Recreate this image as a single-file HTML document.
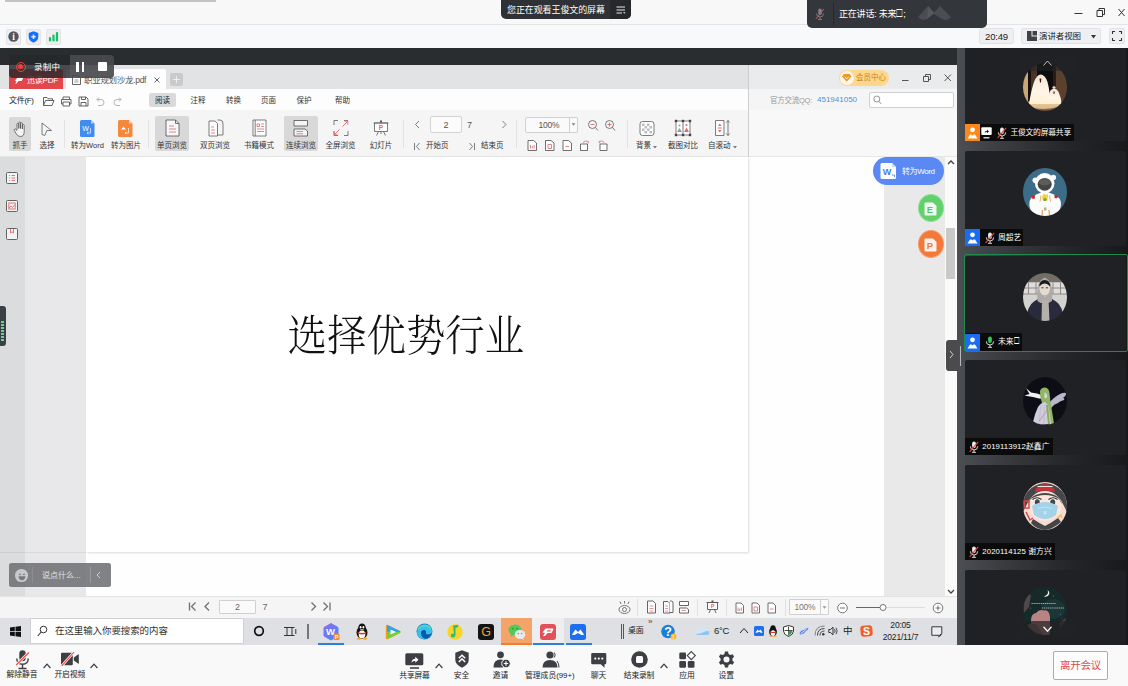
<!DOCTYPE html>
<html lang="zh-CN">
<head>
<meta charset="utf-8">
<title>腾讯会议</title>
<style>
*{box-sizing:border-box;margin:0;padding:0}
html,body{width:1128px;height:686px;overflow:hidden;background:#f9f9f9}
body{position:relative;font-family:"Liberation Sans","Noto Sans CJK SC","DejaVu Sans",sans-serif;font-size:9px;color:#222;line-height:1}
.a{position:absolute}
.t{position:absolute;white-space:nowrap;line-height:1}
.c{transform:translateX(-50%)}
.tofu{font-family:"DejaVu Sans",sans-serif;font-size:1.2em;line-height:0;vertical-align:-.04em}
svg{position:absolute;overflow:visible;display:block}
#titlebar{left:0;top:0;width:1128px;height:25px;background:#f8f8f9;border-bottom:1px solid #e3e4e6}
#toolbar{left:0;top:25px;width:1128px;height:23px;background:#f8f9fa}
#band{left:0;top:48px;width:957px;height:17px;background:#2a2d30}
#share{left:0;top:65px;width:957px;height:580px;overflow:hidden;background:#fefefe}
#share>*{margin-top:-65px}
#pclip{left:0;top:48px;width:1128px;height:597px;overflow:hidden;pointer-events:none}
#panel{left:957px;top:48px;width:171px;height:597px;background:linear-gradient(90deg,#4b4e53 0,#484b50 8px,#3a3c40 45px,#25262a 110px,#18191b 171px)}
.card{background:#202124;border-radius:2px}
#bottom{left:0;top:645px;width:1128px;height:41px;background:#f9f9f9}
</style>
</head>
<body>
<!-- ================= SHARED SCREEN (PDF reader) ================= -->
<div class="a" id="share">
  <!-- tab row -->
  <div class="a" style="left:0;top:65px;width:957px;height:24px;background:#e2e3e5"></div>
  <div class="a" style="left:749px;top:65px;width:208px;height:24px;background:#eaebed"></div>
  <div class="a" style="left:9px;top:69px;width:54px;height:20px;background:#e2474b;border-radius:2px 2px 0 0"></div>
  <svg style="left:14px;top:76px" width="10" height="9" viewBox="0 0 10 9"><path d="M1 4.5 L3.5 1.5 H8.5 Q9.5 1.5 9 2.6 L7.6 5 H4.5 L2.5 7.5 H1.2 L2.6 5.2 Z" fill="#fff"/></svg>
  <div class="t" style="left:27px;top:76.5px;font-size:8px;color:#fff;letter-spacing:-.2px">迅读PDF</div>
  <div class="a" style="left:66px;top:69px;width:100px;height:20px;background:#fdfdfd;border-radius:2px 2px 0 0"></div>
  <svg style="left:72px;top:75px" width="9" height="10" viewBox="0 0 9 10"><path d="M.5 .5H6L8.5 3V9.5H.5Z" fill="#fff" stroke="#555" stroke-width=".9"/><path d="M2.3 5H6.5M2.3 7H6.5" stroke="#888" stroke-width=".8"/></svg>
  <div class="t" style="left:84px;top:75.5px;font-size:8.5px;color:#555;letter-spacing:-.3px">职业规划沙龙.pdf</div>
  <svg style="left:154px;top:77px" width="6" height="6" viewBox="0 0 6 6"><path d="M.5 .5L5.5 5.5M5.5 .5L.5 5.5" stroke="#555" stroke-width=".9"/></svg>
  <div class="a" style="left:169.5px;top:73px;width:13px;height:13px;background:#c9cacc;border-radius:2px"></div>
  <svg style="left:172.5px;top:76px" width="7" height="7" viewBox="0 0 7 7"><path d="M3.5 0V7M0 3.5H7" stroke="#eee" stroke-width="1"/></svg>
  <!-- member centre pill -->
  <div class="a" style="left:839px;top:69.7px;width:50px;height:16.3px;border-radius:8.2px;background:#fcd88f"></div>
  <div class="a" style="left:840px;top:70.7px;width:14.3px;height:14.3px;border-radius:50%;background:#fff8ea"></div>
  <svg style="left:842.4px;top:73.4px" width="9.5" height="9.5" viewBox="0 0 8 8"><path d="M1.6 .8H6.4L8 3 4 7.4 0 3Z" fill="#f0982a"/><path d="M2.4 3.2L4 5 5.6 3.2" fill="none" stroke="#fff" stroke-width=".7"/></svg>
  <div class="t" style="left:856px;top:74px;font-size:7.5px;color:#c9821c">会员中心</div>
  <svg style="left:901px;top:72.7px" width="52" height="10" viewBox="0 0 52 10"><path d="M1 7.5H7.5" stroke="#555" stroke-width="1"/><path d="M22.5 3.5H27.5V8.5H22.5ZM24.5 3.5V1.5H29.5V6.5H27.5" fill="none" stroke="#444" stroke-width=".9"/><path d="M43.5 1.5L50 8M50 1.5L43.5 8" stroke="#444" stroke-width=".9"/></svg>

  <!-- menu row -->
  <div class="a" style="left:0;top:89px;width:957px;height:21px;background:#fdfdfd"></div>
  <div class="a" style="left:749px;top:89px;width:208px;height:21px;background:#f5f5f6"></div>
  <div class="t" style="left:9px;top:96.5px;font-size:8px;color:#222;letter-spacing:-.3px">文件(F)</div>
  <svg style="left:42px;top:94.8px" width="84" height="13" viewBox="0 0 84 13">
    <g fill="none" stroke="#555" stroke-width=".9" stroke-linejoin="round">
      <path d="M1.5 10.5V2.5H5L6 3.8H10.5V5.5M1.5 10.5L3.5 5.5H12L10 10.5Z"/>
      <path d="M21 4.5V2H27.5V4.5M19.5 4.5H29V9H27.5M21 9H19.5V4.5M21 7H27.5V11H21Z"/>
      <path d="M37 2H44L46 4V11H37ZM39.5 2V4.5H43.5V2M39 11V7.5H44V11"/>
    </g>
    <g fill="none" stroke="#aaa" stroke-width=".9">
      <path d="M55 4.5H59Q62 4.5 62 7.5T59 10.5H56M57 2.5L55 4.5L57 6.5"/>
      <path d="M79 4.5H75Q72 4.5 72 7.5T75 10.5H78M77 2.5L79 4.5L77 6.5"/>
    </g>
  </svg>
  <div class="a" style="left:149px;top:92.5px;width:27px;height:14px;background:#dadada;border-radius:2px"></div>
  <div class="t c" style="left:162.5px;top:96.8px;font-size:7.5px;color:#222">阅读</div>
  <div class="t c" style="left:198px;top:96.8px;font-size:7.5px;color:#333">注释</div>
  <div class="t c" style="left:233.5px;top:96.8px;font-size:7.5px;color:#333">转换</div>
  <div class="t c" style="left:268.5px;top:96.8px;font-size:7.5px;color:#333">页面</div>
  <div class="t c" style="left:304px;top:96.8px;font-size:7.5px;color:#333">保护</div>
  <div class="t c" style="left:342.5px;top:96.8px;font-size:7.5px;color:#333">帮助</div>
  <div class="t" style="left:770px;top:96.8px;font-size:7.5px;color:#999;letter-spacing:-.25px">官方交流QQ:</div>
  <div class="t" style="left:817px;top:96px;font-size:8px;color:#4a90e2;letter-spacing:0">451941050</div>
  <div class="a" style="left:869px;top:92px;width:85px;height:16px;background:#fff;border:1px solid #d0d0d0;border-radius:2px"></div>
  <svg style="left:873px;top:95px" width="9" height="10" viewBox="0 0 9 10"><circle cx="3.8" cy="4" r="3" fill="none" stroke="#888" stroke-width=".9"/><path d="M6 6.4L8 8.8" stroke="#888" stroke-width="1"/></svg>

  <!-- toolbar row -->
  <div class="a" style="left:0;top:110px;width:957px;height:47px;background:#f5f5f6"></div>
  <div class="a" style="left:749px;top:110px;width:208px;height:47px;background:#f8f8f9"></div>
  <div class="a" style="left:0;top:156px;width:957px;height:1px;background:#e6e6e6"></div>
  <!-- 抓手 -->
  <div class="a" style="left:9px;top:117px;width:22px;height:34px;background:#d8d8d9;border-radius:2px"></div>
  <svg style="left:13px;top:121px" width="14" height="17" viewBox="0 0 14 17"><path d="M4 9V3.2Q4 2.2 4.9 2.2T5.8 3.2V7.5V2Q5.8 1 6.7 1T7.6 2V7.5V2.6Q7.6 1.7 8.5 1.7T9.4 2.6V8V4.4Q9.4 3.5 10.3 3.5T11.2 4.4V10.5Q11.2 15.5 7.4 15.5Q4.8 15.5 3.4 13L1.3 9.3Q.9 8.4 1.7 8T3 8.3L4 9.8" fill="#f4f4f4" stroke="#555" stroke-width=".8" stroke-linejoin="round"/></svg>
  <div class="t c" style="left:20px;top:142.3px;font-size:7.5px;color:#333">抓手</div>
  <!-- 选择 -->
  <svg style="left:41px;top:122px" width="12" height="16" viewBox="0 0 12 16"><path d="M1 1L10.5 8.5H5.8L3.8 13.5L1 12.5Z" fill="none" stroke="#5c5c5c" stroke-width=".8" stroke-linejoin="round"/></svg>
  <div class="t c" style="left:47px;top:142.3px;font-size:7.5px;color:#333">选择</div>
  <div class="a" style="left:64px;top:120px;width:1px;height:28px;background:#e2e2e2"></div>
  <!-- 转为Word -->
  <svg style="left:80px;top:120px" width="15" height="17" viewBox="0 0 15 17"><path d="M1.5 0H11L14.5 3.5V15.5Q14.5 17 13 17H1.5Q0 17 0 15.5V1.5Q0 0 1.5 0Z" fill="#3f8df2"/><path d="M11 0V3.5H14.5Z" fill="#a9ccfa"/><text x="5.6" y="11.3" font-size="7" fill="#fff" text-anchor="middle" font-family="Liberation Sans,sans-serif">W</text><path d="M10.5 8V13H7M8.3 11.8L7 13L8.3 14.2" fill="none" stroke="#dbe9ff" stroke-width=".8"/></svg>
  <div class="t c" style="left:87.5px;top:142.3px;font-size:7.5px;color:#333">转为Word</div>
  <!-- 转为图片 -->
  <svg style="left:118px;top:120px" width="15" height="17" viewBox="0 0 15 17"><path d="M1.5 0H11L14.5 3.5V15.5Q14.5 17 13 17H1.5Q0 17 0 15.5V1.5Q0 0 1.5 0Z" fill="#f6883c"/><path d="M11 0V3.5H14.5Z" fill="#fbc9a4"/><path d="M2.5 10L5.5 6.5 8 9.5H2.5Z" fill="#fff"/><path d="M10.5 8V13H7M8.3 11.8L7 13L8.3 14.2" fill="none" stroke="#ffe9da" stroke-width=".8"/></svg>
  <div class="t c" style="left:126px;top:142.3px;font-size:7.5px;color:#333">转为图片</div>
  <div class="a" style="left:148px;top:120px;width:1px;height:28px;background:#e2e2e2"></div>
  <!-- 单页浏览 -->
  <div class="a" style="left:155px;top:116px;width:34px;height:35px;background:#d8d8d9;border-radius:2px"></div>
  <svg style="left:165px;top:119px" width="15" height="18" viewBox="0 0 15 18"><path d="M1 1H10.5L14 4.5V17H1Z" fill="#f7f7f7" stroke="#505050" stroke-width=".8" stroke-linejoin="round"/><path d="M10.5 1V4.5H14" fill="none" stroke="#505050" stroke-width=".8"/><path d="M4 7H9M4 10H11M4 13H11" stroke="#e0787c" stroke-width=".9"/></svg>
  <div class="t c" style="left:172px;top:142.3px;font-size:7.5px;color:#333">单页浏览</div>
  <!-- 双页浏览 -->
  <svg style="left:208px;top:119px" width="16" height="18" viewBox="0 0 16 18"><path d="M1 2H7L9.5 4.5V17H1Z" fill="#fff" stroke="#5c5c5c" stroke-width=".8" stroke-linejoin="round"/><path d="M9.5 1H12Q15 1 15 5V16H9.5" fill="none" stroke="#5c5c5c" stroke-width=".8"/><path d="M3 8H6M3 11H7M3 14H7" stroke="#e0787c" stroke-width=".9"/></svg>
  <div class="t c" style="left:215px;top:142.3px;font-size:7.5px;color:#333">双页浏览</div>
  <!-- 书籍模式 -->
  <svg style="left:252px;top:119px" width="15" height="18" viewBox="0 0 15 18"><path d="M1 1H14V17H1Z" fill="#fff" stroke="#5c5c5c" stroke-width=".8"/><path d="M3.2 1V17" stroke="#5c5c5c" stroke-width=".8"/><path d="M5 5H7.5V7.5H5ZM9 5H12M9 7.5H12M5 10H12M5 12.5H12" fill="none" stroke="#e0787c" stroke-width=".9"/></svg>
  <div class="t c" style="left:259px;top:142.3px;font-size:7.5px;color:#333">书籍模式</div>
  <!-- 连续浏览 -->
  <div class="a" style="left:284px;top:116px;width:34px;height:35px;background:#d8d8d9;border-radius:2px"></div>
  <svg style="left:293px;top:119px" width="16" height="18" viewBox="0 0 16 18"><path d="M1 1.5H14.5V7H1Z" fill="#f4f4f4" stroke="#505050" stroke-width=".8"/><path d="M1 10H12L14.5 12V17H1Z" fill="#f4f4f4" stroke="#505050" stroke-width=".8" stroke-linejoin="round"/><path d="M3.5 12.5H10M3.5 14.8H10" stroke="#e0787c" stroke-width=".9"/></svg>
  <div class="t c" style="left:301px;top:142.3px;font-size:7.5px;color:#333">连续浏览</div>
  <!-- 全屏浏览 -->
  <svg style="left:333px;top:119px" width="16" height="18" viewBox="0 0 16 18"><path d="M1 6V1.5H5M11 1.5H15M15 12V16.5H11M5 16.5H1V12" fill="none" stroke="#5c5c5c" stroke-width=".8"/><path d="M9.5 7.5L14.5 2.5M11.5 2.2H14.8V5.5M6.5 10.5L1.5 15.5M1.2 12.5V15.8H4.5" fill="none" stroke="#e0686e" stroke-width=".9"/></svg>
  <div class="t c" style="left:340.5px;top:142.3px;font-size:7.5px;color:#333">全屏浏览</div>
  <!-- 幻灯片 -->
  <svg style="left:373px;top:119px" width="16" height="18" viewBox="0 0 16 18"><path d="M7 1.5H9V3.5H7Z" fill="#555"/><path d="M1.5 4H14.5V12.5H1.5Z" fill="#fff" stroke="#5c5c5c" stroke-width=".8"/><path d="M.5 4H15.5M5.5 12.5L3.5 16.5M10.5 12.5L12.5 16.5M8 12.5V15" stroke="#5c5c5c" stroke-width=".8"/><text x="8" y="10.8" font-size="6.5" font-weight="bold" fill="#e0686e" text-anchor="middle" font-family="Liberation Sans,sans-serif">P</text></svg>
  <div class="t c" style="left:381px;top:142.3px;font-size:7.5px;color:#333">幻灯片</div>
  <div class="a" style="left:403px;top:120px;width:1px;height:28px;background:#e2e2e2"></div>
  <!-- page nav -->
  <svg style="left:414px;top:120px" width="94" height="9" viewBox="0 0 94 9"><path d="M5 1L1.5 4.5L5 8M88.5 1L92 4.5L88.5 8" fill="none" stroke="#5c5c5c" stroke-width=".8"/></svg>
  <div class="a" style="left:430px;top:116px;width:32px;height:17px;background:#fbfbfb;border:1px solid #d4d4d4;border-radius:2px"></div>
  <div class="t c" style="left:446px;top:120.5px;font-size:9px;color:#555">2</div>
  <div class="t c" style="left:469.5px;top:120.5px;font-size:9px;color:#555">7</div>
  <svg style="left:413px;top:142px" width="8" height="9" viewBox="0 0 8 9"><path d="M1.5 1V8M6.5 1L3.5 4.5L6.5 8" fill="none" stroke="#5c5c5c" stroke-width=".8"/></svg>
  <div class="t" style="left:426px;top:142.3px;font-size:7.5px;color:#333">开始页</div>
  <svg style="left:468px;top:142px" width="8" height="9" viewBox="0 0 8 9"><path d="M6.5 1V8M1.5 1L4.5 4.5L1.5 8" fill="none" stroke="#5c5c5c" stroke-width=".8"/></svg>
  <div class="t" style="left:481px;top:142.3px;font-size:7.5px;color:#333">结束页</div>
  <div class="a" style="left:516px;top:120px;width:1px;height:28px;background:#e2e2e2"></div>
  <!-- zoom -->
  <div class="a" style="left:525px;top:117px;width:53px;height:16px;background:#fafafa;border:1px solid #d0d0d0;border-radius:2px"></div>
  <div class="a" style="left:569px;top:118px;width:1px;height:14px;background:#d0d0d0"></div>
  <div class="t c" style="left:549px;top:120.5px;font-size:8.5px;color:#555;letter-spacing:-.2px">100%</div>
  <svg style="left:571px;top:123px" width="5" height="3" viewBox="0 0 5 3"><path d="M.5 .3H4.5L2.5 2.8Z" fill="#888"/></svg>
  <svg style="left:587px;top:119px" width="30" height="13" viewBox="0 0 30 13">
    <g fill="none" stroke="#5c5c5c" stroke-width=".8"><circle cx="5.5" cy="5.5" r="4"/><path d="M8.5 8.5L11 11.5"/><circle cx="22.5" cy="5.5" r="4"/><path d="M25.5 8.5L28 11.5"/></g>
    <path d="M3.5 5.5H7.5M20.5 5.5H24.5M22.5 3.5V7.5" stroke="#e0686e" stroke-width=".9"/></svg>
  <svg style="left:527px;top:139px" width="82" height="13" viewBox="0 0 82 13">
    <g fill="#fff" stroke="#555" stroke-width=".85" stroke-linejoin="round">
      <path d="M1 1.5H6.5L9.5 4V11.5H1Z"/><path d="M18.5 1.5H24L27 4V11.5H18.5Z"/><path d="M36 1.5H41.5L44.5 4V11.5H36Z"/>
      <path d="M53.5 5H60.5V11.5H53.5Z"/><path d="M73 5H80V11.5H73Z"/>
    </g>
    <g fill="none" stroke="#e0686e" stroke-width=".8">
      <path d="M3.5 6V9.5M5.3 7V9.5M7.1 6V9.5"/>
      <path d="M21 5.5H24.5V9.5H21Z"/><path d="M38.5 7.5H42"/>
      <path d="M56 3.5Q58 1 61.5 2.5L61 4.5"/><path d="M77.5 3.5Q75.5 1 72 2.5L72.5 4.5"/>
    </g></svg>
  <div class="a" style="left:627px;top:120px;width:1px;height:28px;background:#e2e2e2"></div>
  <!-- 背景 -->
  <svg style="left:639px;top:120px" width="16" height="17" viewBox="0 0 16 17"><rect x="1" y="1.5" width="14" height="14" rx="2.5" fill="#fff" stroke="#5c5c5c" stroke-width=".8"/><g fill="#bdbdbd"><rect x="3" y="3.5" width="2.5" height="2.5"/><rect x="8" y="3.5" width="2.5" height="2.5"/><rect x="5.5" y="6" width="2.5" height="2.5"/><rect x="10.5" y="6" width="2.5" height="2.5"/><rect x="3" y="8.5" width="2.5" height="2.5"/><rect x="8" y="8.5" width="2.5" height="2.5"/><rect x="5.5" y="11" width="2.5" height="2.5"/><rect x="10.5" y="11" width="2.5" height="2.5"/></g></svg>
  <div class="t" style="left:636px;top:142.3px;font-size:7.5px;color:#333">背景</div>
  <svg style="left:653px;top:145.5px" width="4" height="3" viewBox="0 0 4 3"><path d="M0 0H4L2 2.5Z" fill="#777"/></svg>
  <!-- 截图对比 -->
  <svg style="left:674px;top:119px" width="18" height="18" viewBox="0 0 18 18"><path d="M2 2H16V16H2ZM9 2V16" fill="#fff" stroke="#5c5c5c" stroke-width=".8"/><g fill="#444"><rect x=".8" y=".8" width="2.4" height="2.4"/><rect x="7.8" y=".8" width="2.4" height="2.4"/><rect x="14.8" y=".8" width="2.4" height="2.4"/><rect x=".8" y="14.8" width="2.4" height="2.4"/><rect x="7.8" y="14.8" width="2.4" height="2.4"/><rect x="14.8" y="14.8" width="2.4" height="2.4"/></g><path d="M3 13L5.5 9L8 13Z" fill="#999"/><path d="M10 13L12.5 8.5L15 13Z" fill="#e0686e"/><circle cx="5.5" cy="6.5" r="1" fill="#999"/><circle cx="12.5" cy="6" r="1" fill="#e0686e"/></svg>
  <div class="t c" style="left:683px;top:142.3px;font-size:7.5px;color:#333">截图对比</div>
  <!-- 自滚动 -->
  <svg style="left:714px;top:119px" width="17" height="18" viewBox="0 0 17 18"><path d="M1.5 1.5H10V16.5H1.5Z" fill="#fff" stroke="#5c5c5c" stroke-width=".8"/><path d="M4 7L5.8 4.5L7.6 7ZM4 11L5.8 13.5L7.6 11ZM4 8.5H7.6V9.5H4Z" fill="#e0686e"/><path d="M14 1.5V16.5M12.3 3.5L14 1.5L15.7 3.5M12.3 14.5L14 16.5L15.7 14.5" fill="none" stroke="#5c5c5c" stroke-width=".8"/></svg>
  <div class="t" style="left:708px;top:142.3px;font-size:7.5px;color:#333">自滚动</div>
  <svg style="left:733px;top:145.5px" width="4" height="3" viewBox="0 0 4 3"><path d="M0 0H4L2 2.5Z" fill="#777"/></svg>

  <!-- content backgrounds -->
  <div class="a" style="left:0;top:157px;width:25px;height:440px;background:#dbdcde"></div>
  <div class="a" style="left:25px;top:157px;width:61px;height:440px;background:#e8e8ea"></div>
  <div class="a" style="left:86px;top:157px;width:798px;height:440px;background:#fefefe"></div>
  <div class="a" style="left:884px;top:157px;width:61px;height:440px;background:#e9e9e9"></div>
  <div class="a" style="left:945px;top:157px;width:12px;height:440px;background:#fafafa"></div>
  <!-- page -->
  <div class="a" style="left:86px;top:157px;width:662px;height:395px;background:#fff;box-shadow:1px 1px 2px rgba(0,0,0,.14)"></div>
  <div class="a" style="left:748px;top:65px;width:1px;height:92px;background:#cdcdcd"></div>
  <div class="a" style="left:0;top:552px;width:86px;height:1px;background:rgba(0,0,0,.06)"></div>
  <div class="t" style="left:287.8px;top:308.7px;font-size:39.4px;line-height:56px;font-family:'Liberation Serif','Noto Serif CJK SC',serif;font-weight:300;color:#111;transform:scaleY(1.1);transform-origin:0 50%">选择优势行业</div>
  <!-- left sidebar icons -->
  <svg style="left:6px;top:172px" width="12" height="70" viewBox="0 0 12 70">
    <g fill="#f3f3f3" stroke="#555" stroke-width=".9"><rect x=".5" y=".5" width="11" height="11" rx="1"/><rect x=".5" y="28.5" width="11" height="11" rx="1"/><rect x=".5" y="56.5" width="11" height="11" rx="1"/></g>
    <g fill="none" stroke="#e0686e" stroke-width=".9"><path d="M3 3.5H4M5.5 3.5H9M3 6H4M5.5 6H9M3 8.5H4M5.5 8.5H9"/><rect x="2.8" y="31" width="6.4" height="6"/><path d="M3 36L5 34L6.5 35.5L9 32.5"/><path d="M4.5 57V61L6 59.8L7.5 61V57"/></g>
  </svg>
  <!-- left handle -->
  <div class="a" style="left:0;top:306px;width:6px;height:40px;background:#394047;border-radius:0 3px 3px 0"></div>
  <div class="a" style="left:1px;top:321px;width:3px;height:20px;background:repeating-linear-gradient(#6fd08a 0 2px,#394047 2px 3px)"></div>
  <!-- float buttons -->
  <div class="a" style="left:873px;top:157px;width:71px;height:28px;border-radius:14px;background:#5b89f3"></div>
  <svg style="left:880px;top:162px" width="17" height="18" viewBox="0 0 17 18"><path d="M2 1H12L16 5V15.5Q16 17 14.5 17H2Q.5 17 .5 15.5V2.5Q.5 1 2 1Z" fill="#fff"/><path d="M12 1V5H16Z" fill="#c7d8fb"/><text x="7" y="13" font-size="9" font-weight="bold" fill="#4a7bea" text-anchor="middle" font-family="Liberation Sans,sans-serif">W</text><path d="M12 13H14.5V15" fill="none" stroke="#4a7bea" stroke-width=".8"/></svg>
  <div class="t" style="left:902px;top:167.8px;font-size:8px;color:#fff;letter-spacing:-.4px">转为Word</div>
  <div class="a" style="left:917.8px;top:194px;width:26px;height:27.5px;border-radius:50%;background:#62d06b;border:1px solid #8fdf96"></div>
  <svg style="left:924.3px;top:201.5px" width="13" height="14" viewBox="0 0 13 14"><path d="M1.5 .5H9L12.5 4V12.5Q12.5 13.5 11.5 13.5H1.5Q.5 13.5 .5 12.5V1.5Q.5 .5 1.5 .5Z" fill="#fff" opacity=".9"/><text x="5.8" y="10.8" font-size="9.5" font-weight="bold" fill="#55c860" text-anchor="middle" font-family="Liberation Sans,sans-serif">E</text></svg>
  <div class="a" style="left:917.8px;top:230px;width:26px;height:27.5px;border-radius:50%;background:#f4783a;border:1px solid #f79a6b"></div>
  <svg style="left:924.3px;top:237.5px" width="13" height="14" viewBox="0 0 13 14"><path d="M1.5 .5H9L12.5 4V12.5Q12.5 13.5 11.5 13.5H1.5Q.5 13.5 .5 12.5V1.5Q.5 .5 1.5 .5Z" fill="#fff" opacity=".9"/><text x="6" y="10.8" font-size="9.5" font-weight="bold" fill="#f3773a" text-anchor="middle" font-family="Liberation Sans,sans-serif">P</text></svg>
  <!-- scrollbar -->
  <svg style="left:947px;top:160px" width="8" height="5" viewBox="0 0 8 5"><path d="M1 4L4 1L7 4" fill="none" stroke="#444" stroke-width="1.3"/></svg>
  <div class="a" style="left:946px;top:227.5px;width:9px;height:51.5px;background:#c9c9c9"></div>
  <svg style="left:947px;top:589px" width="8" height="5" viewBox="0 0 8 5"><path d="M1 1L4 4L7 1" fill="none" stroke="#444" stroke-width="1.3"/></svg>
  <!-- say something pill -->
  <div class="a" style="left:9px;top:563px;width:102px;height:24px;border-radius:2.5px;background:rgba(112,113,117,.88)"></div>
  <div class="a" style="left:15.2px;top:569.3px;width:12.6px;height:12.6px;border-radius:50%;background:#c9c9cb"></div>
  <svg style="left:15.5px;top:569.6px" width="12" height="12" viewBox="0 0 12 12"><circle cx="4" cy="4.3" r=".9" fill="#77787b"/><circle cx="8" cy="4.3" r=".9" fill="#77787b"/><path d="M2.5 6.3H9.5Q9 10.3 6 10.3T2.5 6.3Z" fill="#77787b"/></svg>
  <div class="a" style="left:32px;top:567px;width:1px;height:16px;background:#8e8e8e"></div>
  <div class="t" style="left:42px;top:571.5px;font-size:8px;color:#e2e2e2;letter-spacing:0">说点什么...</div>
  <div class="a" style="left:90px;top:567px;width:1px;height:16px;background:#9a9a9a"></div>
  <svg style="left:96px;top:571px" width="5" height="8" viewBox="0 0 5 8"><path d="M4 1L1 4L4 7" fill="none" stroke="#ccc" stroke-width="1"/></svg>

  <!-- PDF status bar -->
  <div class="a" style="left:0;top:597px;width:957px;height:21px;background:#f5f5f6"></div>
  <div class="a" style="left:0;top:596px;width:957px;height:1px;background:#e4e4e4"></div>
  <svg style="left:188px;top:601px" width="145" height="11" viewBox="0 0 145 11"><g fill="none" stroke="#707070" stroke-width="1.3"><path d="M1.5 1.5V9.5M7.5 1.5L3.5 5.5L7.5 9.5"/><path d="M21 1.5L17 5.5L21 9.5"/><path d="M123.5 1.5L127.5 5.5L123.5 9.5"/><path d="M135.5 1.5L139.5 5.5L135.5 9.5M142 1.5V9.5"/></g></svg>
  <div class="a" style="left:219px;top:600px;width:37px;height:14px;background:#fafafa;border:1px solid #d0d0d0;border-radius:1px"></div>
  <div class="t c" style="left:237.5px;top:602.5px;font-size:9px;color:#666">2</div>
  <div class="t c" style="left:265px;top:602.5px;font-size:9px;color:#666">7</div>
  <!-- right cluster -->
  <svg style="left:617px;top:599px" width="15" height="16" viewBox="0 0 15 16"><g fill="none" stroke="#666" stroke-width=".9"><ellipse cx="7.5" cy="10.5" rx="5.5" ry="4"/><circle cx="7.5" cy="10.5" r="2"/><path d="M4 5L3 2.5M7.5 4.5V2M11 5L12 2.5"/></g></svg>
  <div class="a" style="left:637px;top:599px;width:1px;height:17px;background:#e0e0e0"></div>
  <svg style="left:646px;top:600px" width="44" height="14" viewBox="0 0 44 14">
    <g fill="#fff" stroke="#555" stroke-width=".9" stroke-linejoin="round"><path d="M1.5 1H7L9.5 3.5V13H1.5Z"/><path d="M17.5 1.5H22L24 3.5V13H17.5Z"/><path d="M24 1H25.5Q27 1 27 3V12.5H24"/><path d="M33.5 1.5H42.5V5.5H33.5Z"/><path d="M33.5 8H40.5L42.5 9.5V13H33.5Z"/></g>
    <path d="M3.5 6H7.5M3.5 8.5H7.5M3.5 11H7.5M19.2 6H22M19.2 8.5H22M19.2 11H22M35.5 10.5H40" stroke="#e0787c" stroke-width=".8"/></svg>
  <div class="a" style="left:697px;top:599px;width:1px;height:17px;background:#e0e0e0"></div>
  <svg style="left:706px;top:600px" width="13" height="14" viewBox="0 0 13 14"><path d="M5.5 .5H7.5V2H5.5Z" fill="#555"/><path d="M1.5 2.5H11.5V9.5H1.5Z" fill="#fff" stroke="#555" stroke-width=".9"/><path d="M.5 2.5H12.5M4.5 9.5L3 13M8.5 9.5L10 13" stroke="#555" stroke-width=".9"/><text x="6.5" y="8.3" font-size="5.5" font-weight="bold" fill="#e0686e" text-anchor="middle" font-family="Liberation Sans,sans-serif">P</text></svg>
  <div class="a" style="left:726px;top:599px;width:1px;height:17px;background:#e0e0e0"></div>
  <svg style="left:735px;top:602px" width="43" height="12" viewBox="0 0 43 12">
    <g fill="#fff" stroke="#555" stroke-width=".85" stroke-linejoin="round"><path d="M1 1H6L8.5 3.5V11H1Z"/><path d="M17 1H22L24.5 3.5V11H17Z"/><path d="M33 1H38L40.5 3.5V11H33Z"/></g>
    <g fill="none" stroke="#e0686e" stroke-width=".8"><path d="M3 5.5V9M4.7 6.5V9M6.4 5.5V9"/><path d="M19 5H22.5V9H19Z"/><path d="M35 7H38.5"/></g></svg>
  <div class="a" style="left:785px;top:599px;width:1px;height:17px;background:#e0e0e0"></div>
  <div class="a" style="left:789px;top:599px;width:40px;height:16px;background:#fafafa;border:1px solid #d0d0d0;border-radius:1px"></div>
  <div class="a" style="left:820px;top:600px;width:1px;height:14px;background:#d0d0d0"></div>
  <div class="t c" style="left:805px;top:602.5px;font-size:8.5px;color:#777;letter-spacing:-.2px">100%</div>
  <svg style="left:822px;top:606px" width="5" height="3" viewBox="0 0 5 3"><path d="M.5 .3H4.5L2.5 2.8Z" fill="#999"/></svg>
  <svg style="left:837px;top:602px" width="108" height="12" viewBox="0 0 108 12"><g fill="#fff" stroke="#666" stroke-width=".9"><circle cx="5.5" cy="6" r="4.8"/><circle cx="101" cy="6" r="4.8"/></g><path d="M3 6H8M98.5 6H103.5M101 3.5V8.5" stroke="#666" stroke-width=".9"/><path d="M19 5.5H46" stroke="#666" stroke-width="1"/><path d="M46 5.5H88" stroke="#ddd" stroke-width="1"/><circle cx="46" cy="5.5" r="3" fill="#fff" stroke="#666" stroke-width=".9"/></svg>

  <!-- Windows taskbar -->
  <div class="a" style="left:0;top:618px;width:957px;height:27px;background:#dee0e3"></div>
  <svg style="left:10px;top:626px" width="11" height="11" viewBox="0 0 11 11"><path d="M0 1.5L4.8 .8V5.2H0ZM5.5 .7L11 0V5.2H5.5ZM0 5.9H4.8V10.3L0 9.6ZM5.5 5.9H11V11L5.5 10.3Z" fill="#111"/></svg>
  <div class="a" style="left:30px;top:618px;width:214px;height:26px;background:#fff;border:1px solid #cfd1d4"></div>
  <svg style="left:37px;top:625px" width="11" height="12" viewBox="0 0 11 12"><circle cx="6.5" cy="4.5" r="3.3" fill="none" stroke="#333" stroke-width="1"/><path d="M4.2 7L.8 11" stroke="#333" stroke-width="1.1"/></svg>
  <div class="t" style="left:55px;top:626px;font-size:9.5px;color:#333;letter-spacing:-.1px">在这里输入你要搜索的内容</div>
  <svg style="left:253px;top:625px" width="12" height="12" viewBox="0 0 12 12"><circle cx="6" cy="6" r="4.3" fill="none" stroke="#111" stroke-width="1.7"/></svg>
  <svg style="left:283px;top:626px" width="14" height="11" viewBox="0 0 14 11"><path d="M1 1.5H11.5M1 9.5H11.5M4 1.5V9.5M9 1.5V9.5M12.8 3V8" fill="none" stroke="#333" stroke-width="1"/></svg>
  <div class="a" style="left:307px;top:624px;width:1.5px;height:15px;background:#777"></div>
  <!-- WPS -->
  <svg style="left:323px;top:623px" width="17" height="18" viewBox="0 0 17 18"><defs><linearGradient id="wpsg" x1="0" y1="0" x2="1" y2="1"><stop offset="0" stop-color="#8f6af0"/><stop offset="1" stop-color="#3f8df5"/></linearGradient></defs><path d="M8 .5L15 4.5V13L8 17L1 13V4.5Z" fill="url(#wpsg)" stroke="url(#wpsg)" stroke-width="1" stroke-linejoin="round"/><text x="7.5" y="12" font-size="9.5" font-weight="bold" fill="#fff" text-anchor="middle" font-family="Liberation Sans,sans-serif">W</text><rect x="10.5" y="10.5" width="6" height="6.5" rx="1" fill="#f28b3c"/><text x="13.5" y="16" font-size="5.5" font-weight="bold" fill="#fff" text-anchor="middle" font-family="Liberation Sans,sans-serif">P</text></svg>
  <div class="a" style="left:318px;top:643px;width:26px;height:2px;background:#2f7fd8"></div>
  <!-- QQ -->
  <svg style="left:355px;top:623px" width="14" height="17" viewBox="0 0 14 17"><ellipse cx="7" cy="9.5" rx="5.5" ry="6.5" fill="#111"/><ellipse cx="7" cy="5" rx="3.8" ry="4.5" fill="#111"/><ellipse cx="7" cy="11.5" rx="3.3" ry="4" fill="#fff"/><path d="M2.5 8.5Q7 11.5 11.5 8.5L11 10.5Q7 12.5 3 10.5Z" fill="#e5322d"/><ellipse cx="5.6" cy="4.3" rx=".9" ry="1.3" fill="#fff"/><ellipse cx="8.4" cy="4.3" rx=".9" ry="1.3" fill="#fff"/><ellipse cx="7" cy="6.8" rx="2.2" ry=".8" fill="#f5a623"/><ellipse cx="4" cy="15.8" rx="2.3" ry="1" fill="#f5a623"/><ellipse cx="10" cy="15.8" rx="2.3" ry="1" fill="#f5a623"/></svg>
  <!-- Tencent video -->
  <svg style="left:385px;top:624px" width="16" height="16" viewBox="0 0 16 16"><path d="M2.5 .8Q.8 .3 .8 2V14Q.8 15.7 2.5 15.2L15 9Q16 8 15 7Z" fill="#f59a23"/><path d="M3 1.2Q2 1 2 2.5V8H15.5Q15.5 7.3 15 7Z" fill="#2aa7f0"/><path d="M2 8V13.5Q2 15 3 14.8L15 9Q15.5 8.7 15.5 8Z" fill="#6fd13c"/><path d="M5.5 5.5V10.5L11 8Z" fill="#fff"/></svg>
  <!-- Edge -->
  <svg style="left:416px;top:623px" width="17" height="17" viewBox="0 0 17 17"><circle cx="8.5" cy="8.5" r="8" fill="#1b87d6"/><path d="M1 10Q1.5 2 8.5 1.5Q15.5 1.5 16 8Q15.5 11.5 12 11.5Q9.5 11.5 10 9.5Q10.5 7.5 8.5 7Q5 7 5 10.5Q5.5 15 10 16Q2 16.5 1 10Z" fill="#35c1f1"/><path d="M5 10.5Q5 7 8.5 7Q10.5 7.5 10 9.5Q9.5 11.5 12 11.5Q14.5 11.5 15.5 10Q13.5 15.5 9 15.5Q5.5 14.5 5 10.5Z" fill="#0c59a4"/><path d="M2 7Q3.5 2.5 8.5 2.5Q13 2.5 14.5 6" fill="none" stroke="#7be08a" stroke-width="1.5" opacity=".7"/></svg>
  <!-- QQ music -->
  <svg style="left:447px;top:624px" width="16" height="16" viewBox="0 0 16 16"><circle cx="8" cy="8" r="7.7" fill="#f8d52c"/><path d="M6 1.5L11.5 .8L10.5 3.5L8.5 3.8V10.5Q8.5 13.5 6 13.5Q3.8 13.5 3.8 11.5Q3.8 9.5 6 9.5Q6.8 9.5 7 9.8Z" fill="#2ebd6b"/></svg>
  <!-- G -->
  <svg style="left:478px;top:624px" width="16" height="16" viewBox="0 0 16 16"><rect width="16" height="16" rx="3" fill="#141414"/><text x="8" y="12.3" font-size="12.5" fill="#f5a033" text-anchor="middle" font-family="Liberation Sans,sans-serif">G</text></svg>
  <!-- WeChat (highlighted) -->
  <div class="a" style="left:501px;top:618px;width:31px;height:27px;background:#f4a469"></div>
  <div class="a" style="left:501px;top:643px;width:31px;height:2px;background:#ee7f2c"></div>
  <svg style="left:508px;top:624px" width="18" height="16" viewBox="0 0 18 16"><ellipse cx="7" cy="6" rx="6.5" ry="5.5" fill="#4fcb5c"/><path d="M3 10L2.5 13L5.5 11Z" fill="#4fcb5c"/><ellipse cx="12" cy="10.5" rx="5.3" ry="4.5" fill="#e9e9e9"/><path d="M15 14L15.8 15.8L13 14.7Z" fill="#e9e9e9"/><circle cx="4.8" cy="4.8" r=".8" fill="#2a8a36"/><circle cx="9" cy="4.8" r=".8" fill="#2a8a36"/><circle cx="10.3" cy="9.5" r=".7" fill="#888"/><circle cx="13.7" cy="9.5" r=".7" fill="#888"/></svg>
  <!-- Xundu PDF -->
  <div class="a" style="left:532px;top:618px;width:32px;height:25px;background:#eceef0"></div>
  <svg style="left:540px;top:624px" width="16" height="16" viewBox="0 0 16 16"><rect width="16" height="16" rx="3" fill="#e1515a"/><path d="M2.5 8.5L5.5 4.5H12.5Q13.8 4.5 13.2 5.8L11.5 9H7.5L5 12H3L5 9Z" fill="#fff"/><path d="M7.5 6.2H11L10.3 7.5H6.8Z" fill="#e1515a"/></svg>
  <div class="a" style="left:533px;top:643px;width:31px;height:2px;background:#2f7fd8"></div>
  <!-- Tencent meeting -->
  <svg style="left:570px;top:624px" width="16" height="16" viewBox="0 0 16 16"><rect width="16" height="16" rx="2.5" fill="#1e6ff0"/><path d="M2 10.5L5.5 5.5L8 8L10.5 5.5L14 10.5Q12.5 11.5 10.5 10.5L8 9L5.5 10.5Q3.5 11.5 2 10.5Z" fill="#fff"/></svg>
  <div class="a" style="left:566px;top:643px;width:26px;height:2px;background:#2f7fd8"></div>
  <!-- right part -->
  <div class="a" style="left:621px;top:624px;width:1px;height:15px;background:#555"></div>
  <div class="a" style="left:623px;top:624px;width:1px;height:15px;background:#555"></div>
  <div class="t" style="left:628px;top:627px;font-size:8px;color:#222;letter-spacing:-.3px">桌面</div>
  <div class="t" style="left:648px;top:618px;font-size:8px;color:#445">»</div>
  <svg style="left:661px;top:624px" width="16" height="16" viewBox="0 0 16 16"><circle cx="7" cy="7.5" r="6.8" fill="#1b7fd4"/><text x="7" y="12.2" font-size="12.5" font-weight="bold" fill="#fff" text-anchor="middle" font-family="Liberation Sans,sans-serif">?</text><circle cx="12.5" cy="12.5" r="3" fill="#f5b82e"/><text x="12.5" y="14.5" font-size="5.5" font-weight="bold" fill="#fff" text-anchor="middle" font-family="Liberation Sans,sans-serif">!</text></svg>
  <svg style="left:695px;top:625px" width="15" height="11" viewBox="0 0 15 11"><path d="M3.5 10Q.5 10 .5 7.5Q.5 5.5 3 5.3Q3.5 2 7 2Q10 2 10.8 4.5Q14.5 4.5 14.5 7.3Q14.5 10 11.5 10Z" fill="#cfe6fa"/><path d="M3.5 10Q1.5 10 1 8.5Q5 9.5 9 7Q12 5.5 14.3 6.5Q15 10 11.5 10Z" fill="#8fc4f0"/></svg>
  <div class="t" style="left:714px;top:626px;font-size:9.5px;color:#222;letter-spacing:-.3px">6°C</div>
  <svg style="left:739px;top:627px" width="10" height="7" viewBox="0 0 10 7"><path d="M1 6L5 1.5L9 6" fill="none" stroke="#222" stroke-width="1"/></svg>
  <svg style="left:754px;top:626px" width="10" height="10" viewBox="0 0 10 10"><rect width="10" height="10" rx="1.5" fill="#1e6ff0"/><path d="M1.5 6.5L3.5 3.5L5 5L6.5 3.5L8.5 6.5Q7.5 7.2 6.5 6.5L5 5.8L3.5 6.5Q2.5 7.2 1.5 6.5Z" fill="#fff"/></svg>
  <svg style="left:768px;top:625px" width="10" height="12" viewBox="0 0 14 17"><ellipse cx="7" cy="9.5" rx="5.5" ry="6.5" fill="#111"/><ellipse cx="7" cy="5" rx="3.8" ry="4.5" fill="#111"/><ellipse cx="7" cy="11.5" rx="3.3" ry="4" fill="#fff"/><path d="M2.5 8.5Q7 11.5 11.5 8.5L11 10.5Q7 12.5 3 10.5Z" fill="#e5322d"/><ellipse cx="4" cy="15.8" rx="2.3" ry="1" fill="#f5a623"/><ellipse cx="10" cy="15.8" rx="2.3" ry="1" fill="#f5a623"/></svg>
  <svg style="left:783px;top:625px" width="11" height="12" viewBox="0 0 11 12"><path d="M5.5 .5L10.5 2V6Q10.5 9.5 5.5 11.5Q.5 9.5 .5 6V2Z" fill="#fff" stroke="#222" stroke-width=".9"/><path d="M5.5 1.5V10.5M1.5 5.5H9.5" stroke="#222" stroke-width=".8"/><path d="M5.5 6H9.5Q9.3 8.8 5.5 10.5Z" fill="#2fa84f"/></svg>
  <svg style="left:799px;top:627px" width="10" height="8" viewBox="0 0 10 8"><path d="M.5 6Q2 2.5 5 3Q7 .5 9.5 1Q9 4 6.5 4.5Q5 7.5 1 7.5Z" fill="#5a8cf0"/><path d="M2 6.5L7.5 2" stroke="#fff" stroke-width=".7"/></svg>
  <svg style="left:814px;top:625px" width="11" height="11" viewBox="0 0 11 11"><g fill="none" stroke="#333" stroke-width=".9"><path d="M1 10.5Q1 1 10.5 1" stroke="#777"/><path d="M3.5 10.5Q3.5 3.5 10.5 3.5"/><path d="M6 10.5Q6 6 10.5 6"/></g><circle cx="9.3" cy="9.3" r="1.2" fill="#333"/></svg>
  <svg style="left:828px;top:626px" width="11" height="10" viewBox="0 0 11 10"><path d="M.8 3.5H2.5L5 1.2V8.8L2.5 6.5H.8Z" fill="none" stroke="#222" stroke-width=".9" stroke-linejoin="round"/><path d="M6.5 3.2Q7.8 5 6.5 6.8M8 1.8Q10.3 5 8 8.2" fill="none" stroke="#222" stroke-width=".8"/></svg>
  <div class="t" style="left:843px;top:626px;font-size:9.5px;color:#222">中</div>
  <svg style="left:860px;top:625px" width="13" height="12" viewBox="0 0 13 12"><rect x=".5" y=".5" width="12" height="11" rx="3" fill="#f2602a" transform="rotate(-6 6.5 6)"/><text x="6.5" y="9.8" font-size="10.5" font-weight="bold" fill="#fff" text-anchor="middle" font-family="Liberation Sans,sans-serif">S</text></svg>
  <div class="t c" style="left:900.5px;top:621px;font-size:8.5px;color:#222;letter-spacing:-.2px">20:05</div>
  <div class="t c" style="left:900.5px;top:633px;font-size:8.5px;color:#222;letter-spacing:-.2px">2021/11/7</div>
  <svg style="left:931px;top:626px" width="12" height="12" viewBox="0 0 12 12"><path d="M.8 .8H10.8V7.5L8.5 9.3H3.8V9.3L2.8 9.3H.8Z" fill="#ececee" stroke="#222" stroke-width=".9" stroke-linejoin="round"/><path d="M7.2 10.8Q9.5 10.5 10.5 8" fill="none" stroke="#222" stroke-width=".9"/></svg>

</div>
<div class="a" id="pclip"><div class="a" style="left:0;top:-48px;width:1128px;height:686px"><!-- ================= RIGHT PANEL ================= -->
<div class="a" id="panel"></div>
<div class="a card" style="left:964.8px;top:46.3px;width:161.4px;height:95px"></div>
<svg style="left:1022.8px;top:63.3px" width="44" height="48" viewBox="0 0 44 48"><defs><clipPath id="cp0"><ellipse cx="22" cy="24" rx="22" ry="24"/></clipPath><filter id="bl0" x="-10%" y="-10%" width="120%" height="120%"><feGaussianBlur stdDeviation=".45"/></filter><linearGradient id="gg1" x1="0" y1="0" x2="0" y2="1"><stop offset="0" stop-color="#f3e6d6"/><stop offset=".6" stop-color="#fff6e8"/><stop offset="1" stop-color="#ffefcf"/></linearGradient><linearGradient id="gfl" x1="0" y1="0" x2="0" y2="1"><stop offset="0" stop-color="#c9a070"/><stop offset="1" stop-color="#6e4f36"/></linearGradient></defs><g clip-path="url(#cp0)"><g filter="url(#bl0)"><rect width="44" height="48" fill="#1a1512"/><rect x="0" y="0" width="5" height="48" fill="#c9a57a"/><rect x="5" y="0" width="3" height="48" fill="#120e0c"/><rect x="8" y="0" width="6" height="48" fill="#4a3426"/><rect x="14" y="0" width="16" height="30" fill="#0f0c0b"/><rect x="30" y="0" width="3" height="48" fill="#2b1f18"/><rect x="33" y="0" width="11" height="48" fill="#5c3f2e"/><rect x="0" y="40" width="44" height="8" fill="url(#gfl)"/><ellipse cx="20" cy="41" rx="17" ry="5" fill="#f2d6a6" opacity=".75"/><path d="M6 41Q8 28 11 19Q14 11.5 17.5 11.5Q22 11.5 24.5 19Q27 28 27 41Z" fill="url(#gg1)"/><path d="M25 41Q25 31 27.5 27.5Q29.5 25.5 31 25.5Q34 25.5 36 30Q38.5 36 38.5 41Z" fill="url(#gg1)"/><ellipse cx="31" cy="24.5" rx="1.6" ry="1.3" fill="#ead9c0"/><path d="M16.5 15.5L18.3 15.5L18 19.5L17 19.5Z" fill="#3a1512"/><path d="M30.3 28.5L31.7 28.5L31.4 31L30.6 31Z" fill="#3a1512"/></g></g></svg>
<div class="a" style="left:964.8px;top:124px;width:109px;height:17.3px;background:#0b0b0c"></div>
<svg style="left:964.8px;top:124.2px" width="15" height="17" viewBox="0 0 15 17"><rect width="15" height="17" fill="#ff8717"/><circle cx="7.5" cy="5.8" r="2.4" fill="#fff"/><path d="M2.5 14.5L5 10.5H6.5L7.5 11.5L8.5 10.5H10L12.5 14.5Z" fill="#fff"/></svg>
<svg style="left:981px;top:126.5px" width="11" height="12" viewBox="0 0 11 12"><rect x=".3" y=".3" width="10.4" height="7.8" rx="1" fill="#fff"/><path d="M3.5 6Q3.8 3.8 6 3.8V2.5L8 4.5L6 6.3V5Q4.5 5 3.5 6Z" fill="#222"/><path d="M2.5 10.8H8.5" stroke="#fff" stroke-width="1.2"/></svg>
<svg style="left:996.6px;top:126.8px" width="10" height="12" viewBox="0 0 10 12"><rect x="3.1" y=".5" width="3.8" height="6.5" rx="1.9" fill="#e9e9e9"/><path d="M1.3 5.3Q1.3 9 5 9T8.7 5.3M5 9V11.3M3 11.3H7" fill="none" stroke="#e9e9e9" stroke-width=".9"/><path d="M.6 10.8L9.2 .8" stroke="#e5443f" stroke-width="1.1"/></svg>
<div class="t" style="left:1010.4px;top:128.8px;font-size:7.8px;color:#fff;letter-spacing:-0.22px">王俊文的屏幕共享</div>
<div class="a card" style="left:964.8px;top:151px;width:161.4px;height:95px"></div>
<svg style="left:1022.8px;top:168px" width="44" height="48" viewBox="0 0 44 48"><defs><clipPath id="cp1"><ellipse cx="22" cy="24" rx="22" ry="24"/></clipPath><filter id="bl1" x="-10%" y="-10%" width="120%" height="120%"><feGaussianBlur stdDeviation=".45"/></filter></defs><g clip-path="url(#cp1)"><g filter="url(#bl1)"><rect width="44" height="48" fill="#3e6c89"/><path d="M8 48Q6.5 38 9 31Q12 25 22 24Q32 25 35 31Q37.5 38 36 48Z" fill="#fcfcfc"/><ellipse cx="10.5" cy="36" rx="4.2" ry="7" fill="#fcfcfc"/><ellipse cx="33.8" cy="36" rx="4.2" ry="7" fill="#fcfcfc"/><circle cx="12.3" cy="12.3" r="2.8" fill="#fbf4f4"/><circle cx="30.3" cy="9.5" r="2.8" fill="#fbf4f4"/><ellipse cx="21.7" cy="15.2" rx="9.8" ry="10.2" fill="#fdfdfd"/><ellipse cx="21.7" cy="16.3" rx="7" ry="6.4" fill="#454543"/><ellipse cx="21.7" cy="14.3" rx="5.8" ry="3.2" fill="#6e6e6c" opacity=".55"/><rect x="9" y="27.5" width="2.8" height="3.2" fill="#d8201f"/><rect x="31.5" y="27" width="2.8" height="3.2" fill="#d8201f"/><path d="M19 29L21 25.5L23 27L25 26L24.5 32.5L20 33Z" fill="#ecd23a"/><circle cx="22" cy="31.5" r="1.6" fill="#7da23a"/><path d="M18 27.5L17 33.5M26.5 27.5L27.5 33.5" stroke="#e6b070" stroke-width="1"/><path d="M19.5 42L19 47.5M26 42L26.5 47.5" stroke="#e89a5a" stroke-width="1.2"/><rect x="21" y="39.5" width="2.5" height="3" fill="#b9b08a"/></g></g></svg>
<div class="a" style="left:964.8px;top:228.7px;width:58px;height:17.3px;background:#0b0b0c"></div>
<svg style="left:964.8px;top:228.8px" width="15" height="17" viewBox="0 0 15 17"><rect width="15" height="17" fill="#1a6cf2"/><circle cx="7.5" cy="5.8" r="2.4" fill="#fff"/><path d="M2.5 14.5L5 10.5H6.5L7.5 11.5L8.5 10.5H10L12.5 14.5Z" fill="#fff"/></svg>
<svg style="left:985px;top:231.5px" width="10" height="12" viewBox="0 0 10 12"><rect x="3.1" y=".5" width="3.8" height="6.5" rx="1.9" fill="#e9e9e9"/><path d="M1.3 5.3Q1.3 9 5 9T8.7 5.3M5 9V11.3M3 11.3H7" fill="none" stroke="#e9e9e9" stroke-width=".9"/><path d="M.6 10.8L9.2 .8" stroke="#e5443f" stroke-width="1.1"/></svg>
<div class="t" style="left:998px;top:233.5px;font-size:7.8px;color:#fff;letter-spacing:-0.1px">周超艺</div>
<div class="a card" style="left:964.8px;top:255.7px;width:161.4px;height:95px"></div>
<div class="a" style="left:963.5px;top:254.2px;width:164px;height:98px;border:1.5px solid #1d8a4e;border-radius:2px"></div>
<svg style="left:1022.8px;top:272.7px" width="44" height="48" viewBox="0 0 44 48"><defs><clipPath id="cp2"><ellipse cx="22" cy="24" rx="22" ry="24"/></clipPath><filter id="bl2" x="-10%" y="-10%" width="120%" height="120%"><feGaussianBlur stdDeviation=".45"/></filter></defs><g clip-path="url(#cp2)"><g filter="url(#bl2)"><rect width="44" height="48" fill="#d2d2d0"/><rect width="44" height="9.5" fill="#726d65"/><rect x="0" y="9.5" width="44" height="12" fill="#dcdde0"/><path d="M0 15H44M0 21H44M5.5 9.5V21M13 9.5V21M30 9.5V21M37.5 9.5V21" stroke="#8d7f72" stroke-width=".9"/><path d="M0 9.5V22M44 9.5V22" stroke="#7fb4cf" stroke-width="1.2"/><path d="M4 48Q3.5 33 11 28.5L18 24H26L33 28.5Q40.5 33 40 48Z" fill="#2b2c3c"/><path d="M14.5 28Q12.5 8 21.7 4.5Q31 8 29 28L25.5 30H17.5Z" fill="#acaaa8"/><path d="M19 27H25.5L26.5 48H18.5Z" fill="#b5b1aa"/><ellipse cx="21.7" cy="15.5" rx="5.3" ry="7" fill="#e4dbcf"/><path d="M16.3 13.5Q16.3 7 21.7 7Q27.2 7 27.2 13.5Q24.5 10.5 21.7 10.5Q19 10.5 16.3 13.5Z" fill="#1f1f22"/><path d="M18.3 14.8H20.6M22.8 14.8H25.1" stroke="#2c2c2c" stroke-width=".9"/><path d="M20 22H23.8L22 25Z" fill="#e8a79a"/></g></g></svg>
<div class="a" style="left:964.8px;top:333.4px;width:57px;height:17.3px;background:#0b0b0c"></div>
<svg style="left:964.8px;top:333.5px" width="15" height="17" viewBox="0 0 15 17"><rect width="15" height="17" fill="#1a6cf2"/><circle cx="7.5" cy="5.8" r="2.4" fill="#fff"/><path d="M2.5 14.5L5 10.5H6.5L7.5 11.5L8.5 10.5H10L12.5 14.5Z" fill="#fff"/></svg>
<svg style="left:985px;top:336.2px" width="10" height="12" viewBox="0 0 10 12"><rect x="3.1" y=".5" width="3.8" height="6.5" rx="1.9" fill="#35c759"/><path d="M1.3 5.3Q1.3 9 5 9T8.7 5.3M5 9V11.3M3 11.3H7" fill="none" stroke="#e9e9e9" stroke-width=".9"/></svg>
<div class="t" style="left:998px;top:338.2px;font-size:7.8px;color:#fff;letter-spacing:0px">未来<span class="tofu">⎕</span></div>
<div class="a card" style="left:964.8px;top:360.4px;width:161.4px;height:95px"></div>
<svg style="left:1022.8px;top:377.4px" width="44" height="48" viewBox="0 0 44 48"><defs><clipPath id="cp3"><ellipse cx="22" cy="24" rx="22" ry="24"/></clipPath><filter id="bl3" x="-10%" y="-10%" width="120%" height="120%"><feGaussianBlur stdDeviation=".45"/></filter></defs><g clip-path="url(#cp3)"><g filter="url(#bl3)"><rect width="44" height="48" fill="#0c1012"/><path d="M25 27Q31 20 37 17Q41 15 43.5 16Q43 19 40 21Q42 21 41 23Q37 24 35 26Q31 27 28 31Z" fill="#b9b6cc"/><path d="M3 11L8 15.5Q14 16 20 18.5L22 22Q16 22 10 20Q5 19 1.5 18.5L6.5 17Z" fill="#f1f1f4"/><path d="M17 14Q18 10.5 22 10.5Q26 11 26.5 16Q27 24 29 34L31 47L26 48L24 36L22 28L19 26Q16.5 20 17 14Z" fill="#93b567"/><path d="M15 30Q18 25.5 22 25L25 28Q27 38 28 47L12 48L10 45Q12 36 15 30Z" fill="#cfcce0"/><path d="M18 27L16 47M21 28V47" stroke="#b5b2c8" stroke-width=".6"/><path d="M21.5 15.5Q24 16 24.3 19.5L23 21.5L21.5 21Z" fill="#d9d5e4"/><path d="M16 44L20 39L24 33" stroke="#c7a7a4" stroke-width="1.2" fill="none"/><path d="M24 28Q25 38 26 47" stroke="#8aad60" stroke-width="2" fill="none"/></g></g></svg>
<div class="a" style="left:964.8px;top:438.1px;width:88.5px;height:17.3px;background:#0b0b0c"></div>
<svg style="left:968.8px;top:440.9px" width="10" height="12" viewBox="0 0 10 12"><rect x="3.1" y=".5" width="3.8" height="6.5" rx="1.9" fill="#e9e9e9"/><path d="M1.3 5.3Q1.3 9 5 9T8.7 5.3M5 9V11.3M3 11.3H7" fill="none" stroke="#e9e9e9" stroke-width=".9"/><path d="M.6 10.8L9.2 .8" stroke="#e5443f" stroke-width="1.1"/></svg>
<div class="t" style="left:982.3px;top:442.9px;font-size:7.8px;color:#fff;letter-spacing:0.08px">2019113912赵鑫广</div>
<div class="a card" style="left:964.8px;top:465.1px;width:161.4px;height:95px"></div>
<svg style="left:1022.8px;top:482.1px" width="44" height="48" viewBox="0 0 44 48"><defs><clipPath id="cp4"><ellipse cx="22" cy="24" rx="22" ry="24"/></clipPath><filter id="bl4" x="-10%" y="-10%" width="120%" height="120%"><feGaussianBlur stdDeviation=".45"/></filter></defs><g clip-path="url(#cp4)"><g filter="url(#bl4)"><rect width="44" height="48" fill="#f6dbd2"/><path d="M0 30Q-2 4 22 1Q46 4 44 30L40 22Q36 12 22 11Q8 12 4 22Z" fill="#47474a"/><path d="M12 10Q13 2.5 22 2Q31 2.5 32 10Q22 7.5 12 10Z" fill="#c7333b"/><path d="M14.5 4.5H29.5" stroke="#f3e6e6" stroke-width="1"/><ellipse cx="22" cy="24" rx="16.5" ry="15" fill="#fbe5dc"/><path d="M5 22Q8 11.5 22 11Q36 11.5 39 22L36 17Q30 13 22 13Q14 13 8 17Z" fill="#47474a"/><ellipse cx="14" cy="20" rx="3.5" ry="3.8" fill="#f7f7f7"/><ellipse cx="30" cy="20" rx="3.5" ry="3.8" fill="#f7f7f7"/><ellipse cx="14.3" cy="20.3" rx="2.5" ry="3" fill="#45464a"/><ellipse cx="29.7" cy="20.3" rx="2.5" ry="3" fill="#45464a"/><path d="M9.5 17.5Q14 14 18.5 17.5M25.5 17.5Q30 14 34.5 17.5" stroke="#333" stroke-width="1.1" fill="none"/><path d="M9 24Q22 16 35 24L33 33Q22 41 11 33Z" fill="#a3d3e8"/><path d="M15 26.5Q22 23.5 29 26.5" stroke="#c9e8f3" stroke-width=".8" fill="none"/><rect x="20.5" y="29" width="3" height="3.5" fill="#c3e3f0"/><path d="M1 19H6V26H2ZM3 30L7 38L10 36" fill="none" stroke="#d24a4a" stroke-width="1.5"/><path d="M10 37Q16 41 22 44Q28 41 35 36L38 40Q30 47 22 48Q13 47 8 41Z" fill="#444446"/><path d="M34.5 36L38 33L39 36" stroke="#f2c21f" stroke-width="1.2" fill="none"/></g></g></svg>
<div class="a" style="left:964.8px;top:542.8px;width:90.5px;height:17.3px;background:#0b0b0c"></div>
<svg style="left:968.8px;top:545.6px" width="10" height="12" viewBox="0 0 10 12"><rect x="3.1" y=".5" width="3.8" height="6.5" rx="1.9" fill="#e9e9e9"/><path d="M1.3 5.3Q1.3 9 5 9T8.7 5.3M5 9V11.3M3 11.3H7" fill="none" stroke="#e9e9e9" stroke-width=".9"/><path d="M.6 10.8L9.2 .8" stroke="#e5443f" stroke-width="1.1"/></svg>
<div class="t" style="left:982.3px;top:547.6px;font-size:7.8px;color:#fff;letter-spacing:0.08px">2020114125 谢方兴</div>
<div class="a card" style="left:964.8px;top:569.8px;width:161.4px;height:95px"></div>
<svg style="left:1022.8px;top:586.8px" width="44" height="48" viewBox="0 0 44 48"><defs><clipPath id="cp5"><ellipse cx="22" cy="24" rx="22" ry="24"/></clipPath><filter id="bl5" x="-10%" y="-10%" width="120%" height="120%"><feGaussianBlur stdDeviation=".45"/></filter></defs><g clip-path="url(#cp5)"><g filter="url(#bl5)"><rect width="44" height="48" fill="#15292b"/><ellipse cx="30" cy="22" rx="12" ry="10" fill="#1d3a3a" opacity=".7"/><path d="M0 12Q5 6 8 8L6 20L1 26Z" fill="#8a6a6a" opacity=".5"/><path d="M8 33Q8 27 13 26Q16 22 21 23.5Q26 22 27 30L27 48H8Z" fill="#b88383"/><path d="M2 40Q8 34 14 38L20 48H0Z" fill="#8c6464"/><path d="M36 36L44 30V44L38 44Z" fill="#5a4a4a" opacity=".8"/><path d="M24.5 3Q26.5 7.5 21 9.5Q25 10.5 26.3 7Q26.8 4.5 24.5 3Z" fill="#f4f1ea"/><path d="M8.5 16.5H33" stroke="#e8eceb" stroke-width=".8" stroke-dasharray="1.3 .6" opacity=".8"/><path d="M19 21H41" stroke="#e8eceb" stroke-width=".8" stroke-dasharray="1.3 .6" opacity=".8"/><circle cx="30.5" cy="9" r=".6" fill="#2fb57d"/><circle cx="37.5" cy="27.5" r=".5" fill="#4a6fd0"/><circle cx="7.5" cy="21" r=".5" fill="#c06a7a"/><circle cx="39" cy="31" r=".5" fill="#c0304a"/></g></g></svg>
<div class="a" style="left:1021px;top:56px;width:53px;height:15px;background:rgba(33,35,38,.6)"></div>
<svg style="left:1043px;top:60px" width="9" height="6" viewBox="0 0 9 6"><path d="M.5 5.5L4.5 1L8.5 5.5" fill="none" stroke="#b9babc" stroke-width="1"/></svg>
<div class="a" style="left:1021px;top:620.5px;width:53px;height:15.5px;background:rgba(33,34,36,.72)"></div>
<svg style="left:1043px;top:625.5px" width="9" height="6" viewBox="0 0 9 6"><path d="M.5 .8L4.5 5.2L8.5 .8" fill="none" stroke="#f2f2f2" stroke-width="1.3"/></svg>
<div class="a" style="left:945.5px;top:339.5px;width:12px;height:31px;background:#4b4b4d;border-radius:3px 0 0 3px"></div>
<svg style="left:949px;top:350px" width="5" height="9" viewBox="0 0 5 9"><path d="M1 1L4 4.5L1 8" fill="none" stroke="#d0d0d0" stroke-width="1"/></svg>
<div class="a" style="left:959.5px;top:346px;width:1px;height:20px;background:#b5b7ba"></div>
</div></div>
<!-- ================= TITLE BAR ================= -->
<div class="a" id="titlebar"></div>
<div class="a" style="left:5px;top:0;width:211px;height:1.5px;background:#c4c4c4"></div>
<div class="a" style="left:501px;top:0;width:130px;height:19px;background:#2e3135;border-radius:0 0 5px 5px;overflow:hidden"><div class="a" style="left:109px;top:0;width:21px;height:19px;background:#26282c"></div></div>
<div class="t" style="left:507px;top:5.6px;font-size:9px;color:#fff;letter-spacing:-.1px">您正在观看王俊文的屏幕</div>
<svg style="left:616px;top:6px" width="10" height="8" viewBox="0 0 10 8"><path d="M.5 1H9M.5 4H9M.5 7H6" stroke="#e8e8e8" stroke-width="1"/><path d="M7 6.3H9.6L8.3 7.8Z" fill="#e8e8e8"/></svg>
<svg style="left:1074px;top:7px" width="52" height="11" viewBox="0 0 52 11"><path d="M.5 6.5H8.5" stroke="#333" stroke-width="1"/><path d="M23 3.5H28.5V9.5H23ZM25 3.5V1.5H30.5V7.5H28.5" fill="none" stroke="#333" stroke-width="1"/><path d="M44.5 2L50.5 9M50.5 2L44.5 9" stroke="#333" stroke-width="1"/></svg>
<!-- ================= TOOLBAR ================= -->
<div class="a" id="toolbar"></div>
<div class="a" style="left:6px;top:28.5px;width:15px;height:16px;background:#eeeef0;border:1px solid #e3e4e6;border-radius:2px"></div>
<div class="a" style="left:26px;top:28.5px;width:15px;height:16px;background:#eeeef0;border:1px solid #e3e4e6;border-radius:2px"></div>
<div class="a" style="left:46px;top:28.5px;width:15px;height:16px;background:#eeeef0;border:1px solid #e3e4e6;border-radius:2px"></div>
<svg style="left:8px;top:31px" width="11" height="11" viewBox="0 0 11 11"><circle cx="5.5" cy="5.5" r="5.2" fill="#53565b"/><text x="5.5" y="9" font-size="9.5" font-weight="bold" fill="#fff" text-anchor="middle" font-family="Liberation Serif,serif">i</text></svg>
<svg style="left:28px;top:31px" width="11" height="12" viewBox="0 0 11 12"><path d="M5.5 .3L10.3 2V6Q10.3 9.5 5.5 11.7Q.7 9.5 .7 6V2Z" fill="#1270fb"/><path d="M5.5 3.6V8M3.3 5.8H7.7" stroke="#dfeaff" stroke-width="1.5"/></svg>
<svg style="left:48px;top:31px" width="11" height="11" viewBox="0 0 11 11"><path d="M2 9.5V7M5.5 9.5V4.5M9 9.5V2" stroke="#10c45c" stroke-width="2.2" stroke-linecap="round"/></svg>
<div class="a" style="left:979px;top:28px;width:35px;height:16px;background:#efeff1;border:1px solid #e2e3e5;border-radius:2px"></div>
<div class="t c" style="left:996.5px;top:31.5px;font-size:9.5px;color:#222;letter-spacing:-.2px">20:49</div>
<div class="a" style="left:1021px;top:28px;width:80px;height:16px;background:#efeff1;border:1px solid #e2e3e5;border-radius:2px"></div>
<svg style="left:1027px;top:31px" width="10" height="10" viewBox="0 0 10 10"><path d="M0 0H4.5V5.5H10V10H0Z" fill="#3f4246"/><rect x="5.5" y="0" width="4.5" height="4.5" fill="#3f4246"/></svg>
<div class="t" style="left:1039px;top:32px;font-size:8.5px;color:#222;letter-spacing:-.1px">演讲者视图</div>
<svg style="left:1091px;top:35px" width="5" height="4" viewBox="0 0 5 4"><path d="M0 0H5L2.5 3.5Z" fill="#333"/></svg>
<div class="a" style="left:1109px;top:28px;width:16px;height:16px;background:#efeff1;border:1px solid #e2e3e5;border-radius:2px"></div>
<svg style="left:1112px;top:31px" width="10" height="10" viewBox="0 0 10 10"><path d="M.5 3V.5H3M7 .5H9.5V3M9.5 7V9.5H7M3 9.5H.5V7" fill="none" stroke="#333" stroke-width="1.1"/></svg>
<div class="a" id="band"></div>
<div class="a" style="left:807px;top:0;width:180px;height:28px;background:#33363b;border-radius:0 0 5px 5px"></div>
<svg style="left:815px;top:8px" width="10" height="12" viewBox="0 0 10 12"><rect x="3.2" y=".5" width="3.6" height="6.5" rx="1.8" fill="#7d8187"/><path d="M1.5 5.5Q1.5 9 5 9T8.5 5.5M5 9V11.5M3 11.5H7" fill="none" stroke="#7d8187" stroke-width=".9"/><path d="M.8 11L9 1" stroke="#e0524f" stroke-width="1"/></svg>
<div class="a" style="left:833px;top:3px;width:1px;height:22px;background:#25272b"></div>
<div class="t" style="left:839px;top:10px;font-size:9px;color:#fff;letter-spacing:-.2px">正在讲话: 未来<span class="tofu">⎕</span>;</div>
<svg style="left:917px;top:3px" width="36" height="22" viewBox="0 0 36 22"><path d="M1 14L11 3L17 9.5L23 3L34 14Q30 19 25 16L17 11L10 16Q5 19 1 14Z" fill="#4a4d52"/><path d="M11 3L17 9.5L10 16Z" fill="#55585d"/></svg>

<!-- recording pill (overlay) -->
<div class="a" style="left:9px;top:54.7px;width:104.5px;height:23.6px;border-radius:4px;background:rgba(38,40,43,.82);overflow:hidden"><div class="a" style="left:60.5px;top:0;width:44px;height:24px;background:rgba(95,97,100,.55)"></div></div>
<div class="a" style="left:15.5px;top:61.5px;width:10px;height:10px;border-radius:50%;border:1px solid #e8453f"></div>
<div class="a" style="left:18px;top:64px;width:5px;height:5px;border-radius:50%;background:#f03f38"></div>
<div class="t" style="left:34px;top:63px;font-size:8.5px;color:#fff;letter-spacing:.2px">录制中</div>
<div class="a" style="left:76px;top:62px;width:2.5px;height:10px;background:#fff"></div>
<div class="a" style="left:81.5px;top:62px;width:2.5px;height:10px;background:#fff"></div>
<div class="a" style="left:98px;top:62px;width:9px;height:9px;background:#fff;border-radius:1px"></div>
<!-- ================= BOTTOM BAR ================= -->
<div class="a" id="bottom"></div>
<!-- mic -->
<svg style="left:15px;top:650px" width="15" height="20" viewBox="0 0 15 20"><rect x="4.3" y=".3" width="6.4" height="11" rx="3.2" fill="#3d3f44"/><path d="M1.8 8.5Q1.8 14.3 7.5 14.3T13.2 8.5M7.5 14.3V18.3M3.5 18.5H11.5" fill="none" stroke="#3d3f44" stroke-width="1.4"/><path d="M1.2 15L13.8 2.5" stroke="#fafafa" stroke-width="2.6"/><path d="M1.2 15L13.8 2.5" stroke="#f5413d" stroke-width="1.1"/></svg>
<div class="t c" style="left:22px;top:671px;font-size:7.8px;color:#222;letter-spacing:-.1px">解除静音</div>
<svg style="left:42.5px;top:662.5px" width="8" height="6" viewBox="0 0 8 6"><path d="M.6 5L4 1.2L7.4 5" fill="none" stroke="#3d3f44" stroke-width="1.2"/></svg>
<!-- video -->
<svg style="left:60px;top:651px" width="20" height="16" viewBox="0 0 20 16"><rect x="1" y="1.8" width="11.8" height="12.4" rx="1.2" fill="#3d3f44"/><path d="M13.8 6.5L18.8 3V13L13.8 9.5Z" fill="#3d3f44"/><path d="M1.8 14.8L14 1" stroke="#fafafa" stroke-width="2.6"/><path d="M1.8 14.8L14 1" stroke="#f5413d" stroke-width="1.1"/></svg>
<div class="t c" style="left:69.8px;top:671px;font-size:7.8px;color:#222;letter-spacing:-.1px">开启视频</div>
<svg style="left:89.7px;top:662.5px" width="8" height="6" viewBox="0 0 8 6"><path d="M.6 5L4 1.2L7.4 5" fill="none" stroke="#3d3f44" stroke-width="1.2"/></svg>
<!-- share screen -->
<svg style="left:404.5px;top:652.5px" width="19" height="17" viewBox="0 0 19 17"><rect x=".3" y=".3" width="18" height="12" rx="1.5" fill="#3d3f44"/><path d="M6.5 9.5Q7 5.8 10.3 5.8V3.8L13.5 6.8L10.3 9.8V7.8Q8 7.8 6.5 9.5Z" fill="#fff"/><path d="M5 15H14" stroke="#3d3f44" stroke-width="1.6"/></svg>
<div class="t c" style="left:414.5px;top:671.5px;font-size:7.8px;color:#222;letter-spacing:-.2px">共享屏幕</div>
<svg style="left:434.5px;top:662.5px" width="8" height="6" viewBox="0 0 8 6"><path d="M.6 5L4 1.2L7.4 5" fill="none" stroke="#3d3f44" stroke-width="1.2"/></svg>
<!-- security -->
<svg style="left:454.5px;top:650px" width="14" height="18" viewBox="0 0 14 18"><path d="M7 .3L13.7 2.8V10Q13.7 14.5 7 17.8Q.3 14.5 .3 10V2.8Z" fill="#3d3f44"/><path d="M3.8 8.3L7 5.2L10.2 8.3M3.8 12L7 8.9L10.2 12" fill="none" stroke="#fff" stroke-width="1.5"/></svg>
<div class="t c" style="left:461.5px;top:671.5px;font-size:7.8px;color:#222">安全</div>
<!-- invite -->
<svg style="left:493px;top:650.5px" width="18" height="17" viewBox="0 0 18 17"><circle cx="7.5" cy="3.8" r="3.4" fill="#3d3f44"/><path d="M.5 16.5Q.5 8.5 7.5 8.5Q11 8.5 12.5 10.5L10 16.5Z" fill="#3d3f44"/><circle cx="13" cy="12.5" r="4.3" fill="#3d3f44" stroke="#f9f9f9" stroke-width="1"/><path d="M13 10.3V14.7M10.8 12.5H15.2" stroke="#fff" stroke-width="1.2"/></svg>
<div class="t c" style="left:500.5px;top:671.5px;font-size:7.8px;color:#222">邀请</div>
<!-- members -->
<svg style="left:542px;top:650.5px" width="18" height="17" viewBox="0 0 18 17"><circle cx="8" cy="4" r="3.6" fill="#3d3f44"/><path d="M.5 16.5Q.5 9 8 9T15.5 16.5Z" fill="#3d3f44"/><path d="M12.3 1.5Q14 4 12.3 6.5" fill="none" stroke="#3d3f44" stroke-width="1"/><path d="M15 10Q17 12.5 17 16.5" fill="none" stroke="#3d3f44" stroke-width="1"/></svg>
<div class="t c" style="left:549.8px;top:671.5px;font-size:7.8px;color:#222;letter-spacing:0">管理成员(99+)</div>
<!-- chat -->
<svg style="left:591px;top:653px" width="16" height="15" viewBox="0 0 16 15"><path d="M1.5 0H14Q15.3 0 15.3 1.3V10Q15.3 11.3 14 11.3H13.5V14.8L9.8 11.3H1.5Q.2 11.3 .2 10V1.3Q.2 0 1.5 0Z" fill="#3d3f44"/><circle cx="4.3" cy="5.6" r="1.1" fill="#fff"/><circle cx="7.8" cy="5.6" r="1.1" fill="#fff"/><circle cx="11.3" cy="5.6" r="1.1" fill="#fff"/></svg>
<div class="t c" style="left:598.5px;top:671.5px;font-size:7.8px;color:#222">聊天</div>
<!-- end recording -->
<svg style="left:630.5px;top:651px" width="17" height="17" viewBox="0 0 17 17"><circle cx="8.5" cy="8.5" r="8.3" fill="#3d3f44"/><rect x="5" y="5" width="7" height="7" rx="1.5" fill="#fff"/></svg>
<div class="t c" style="left:639px;top:671.5px;font-size:7.8px;color:#222;letter-spacing:-.2px">结束录制</div>
<svg style="left:659.5px;top:662.5px" width="8" height="6" viewBox="0 0 8 6"><path d="M.6 5L4 1.2L7.4 5" fill="none" stroke="#3d3f44" stroke-width="1.2"/></svg>
<!-- apps -->
<svg style="left:679px;top:650.5px" width="17" height="17" viewBox="0 0 17 17"><rect x=".3" y="1.5" width="6.7" height="6.7" rx="1.2" fill="#3d3f44"/><rect x=".3" y="10" width="6.7" height="6.7" rx="1.2" fill="#3d3f44"/><rect x="8.8" y="10" width="6.7" height="6.7" rx="1.2" fill="#3d3f44"/><path d="M12.3 .6L16.3 4.6L12.3 8.6L8.3 4.6Z" fill="#fff" stroke="#3d3f44" stroke-width="1.1"/></svg>
<div class="t c" style="left:687px;top:671.5px;font-size:7.8px;color:#222">应用</div>
<!-- settings -->
<svg style="left:717.5px;top:650.5px" width="17" height="17" viewBox="0 0 17 17"><path d="M7 .3H10L10.6 2.6L12.3 3.6L14.6 2.9L16.1 5.5L14.4 7.2V9.2L16.1 10.9L14.6 13.5L12.3 12.8L10.6 13.8L10 16.1H7L6.4 13.8L4.7 12.8L2.4 13.5L.9 10.9L2.6 9.2V7.2L.9 5.5L2.4 2.9L4.7 3.6L6.4 2.6Z" fill="#3d3f44" transform="translate(0 .3)"/><circle cx="8.5" cy="8.5" r="3" fill="#f9f9f9"/></svg>
<div class="t c" style="left:726.3px;top:671.5px;font-size:7.8px;color:#222">设置</div>
<!-- leave -->
<div class="a" style="left:1053px;top:651px;width:55px;height:29px;border:1px solid #f08f8f;border-radius:2px;background:#fdfdfd"></div>
<div class="t c" style="left:1080.5px;top:660px;font-size:10.5px;color:#e5484b;letter-spacing:-.2px">离开会议</div>
</body>
</html>
